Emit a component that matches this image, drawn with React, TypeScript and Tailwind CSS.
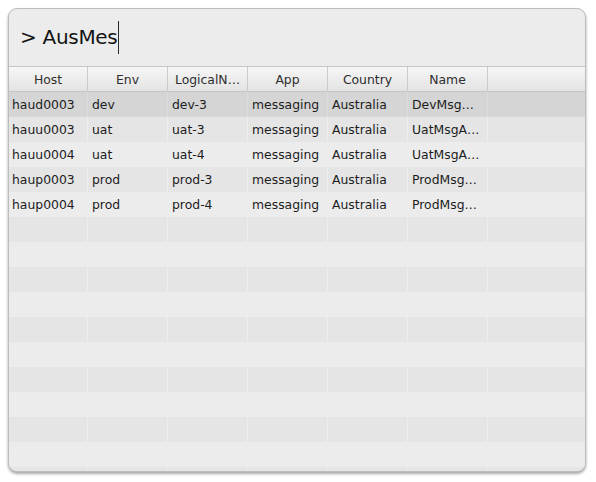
import React from "react";

const columns = ["Host", "Env", "LogicalN…", "App", "Country", "Name"];

const rows = [
  ["haud0003", "dev", "dev-3", "messaging", "Australia", "DevMsg…"],
  ["hauu0003", "uat", "uat-3", "messaging", "Australia", "UatMsgA…"],
  ["hauu0004", "uat", "uat-4", "messaging", "Australia", "UatMsgA…"],
  ["haup0003", "prod", "prod-3", "messaging", "Australia", "ProdMsg…"],
  ["haup0004", "prod", "prod-4", "messaging", "Australia", "ProdMsg…"],
];

const TOTAL_ROWS = 16;

export default function App() {
  const allRows: string[][] = [];
  for (let i = 0; i < TOTAL_ROWS; i++) {
    allRows.push(rows[i] ?? ["", "", "", "", "", ""]);
  }

  return (
    <div
      className="w-[596px] h-[482px] bg-white p-[8px] pb-[10px] pr-[10px]"
      style={{ fontFamily: '"DejaVu Sans", "Liberation Sans", sans-serif' }}
    >
      <div className="flex flex-col h-full rounded-[9px] border border-[#bcbcbc] bg-[#ececec] overflow-hidden shadow-[0_2px_3px_rgba(0,0,0,0.35)]">
        {/* Search bar */}
        <div className="h-[57px] flex items-center pl-[11px] pb-[1px]">
          <span className="text-[20px] text-[#141414] tracking-[-0.3px]">&gt; AusMes</span>
          <span className="inline-block w-px h-[33px] bg-[#2a2a2a] ml-[1px]" />
        </div>

        {/* Header */}
        <div className="flex h-[26px] border-t border-b border-[#c6c6c6] bg-gradient-to-b from-[#f6f6f6] to-[#e3e3e3]">
          {columns.map((c, i) => (
            <div
              key={c}
              className={`${i === 0 ? "w-[79px]" : "w-[80px]"} shrink-0 border-r border-[#cbcbcb] flex items-center justify-center pt-[2px] text-[12.4px] text-[#2e2e2e]`}
            >
              {c}
            </div>
          ))}
          <div className="flex-1" />
        </div>

        {/* Body */}
        <div className="flex-1 overflow-hidden">
          {allRows.map((r, ri) => (
            <div
              key={ri}
              className={`flex h-[25px] ${
                ri === 0 ? "bg-[#d5d5d5]" : ri % 2 === 1 ? "bg-[#e5e5e5]" : "bg-[#ececec]"
              }`}
            >
              {r.map((cell, ci) => (
                <div
                  key={ci}
                  className={`${ci === 0 ? "w-[79px] pl-[3px]" : "w-[80px] pl-[4px]"} shrink-0 border-r ${
                    ri === 0 ? "border-[#dcdcdc]" : ri % 2 === 1 ? "border-[#ededed]" : "border-[#ececec]"
                  } flex items-center pt-[1px] text-[12.4px] text-[#1c1c1c] whitespace-nowrap overflow-hidden`}
                >
                  {cell}
                </div>
              ))}
              <div className="flex-1" />
            </div>
          ))}
        </div>
      </div>
    </div>
  );
}
